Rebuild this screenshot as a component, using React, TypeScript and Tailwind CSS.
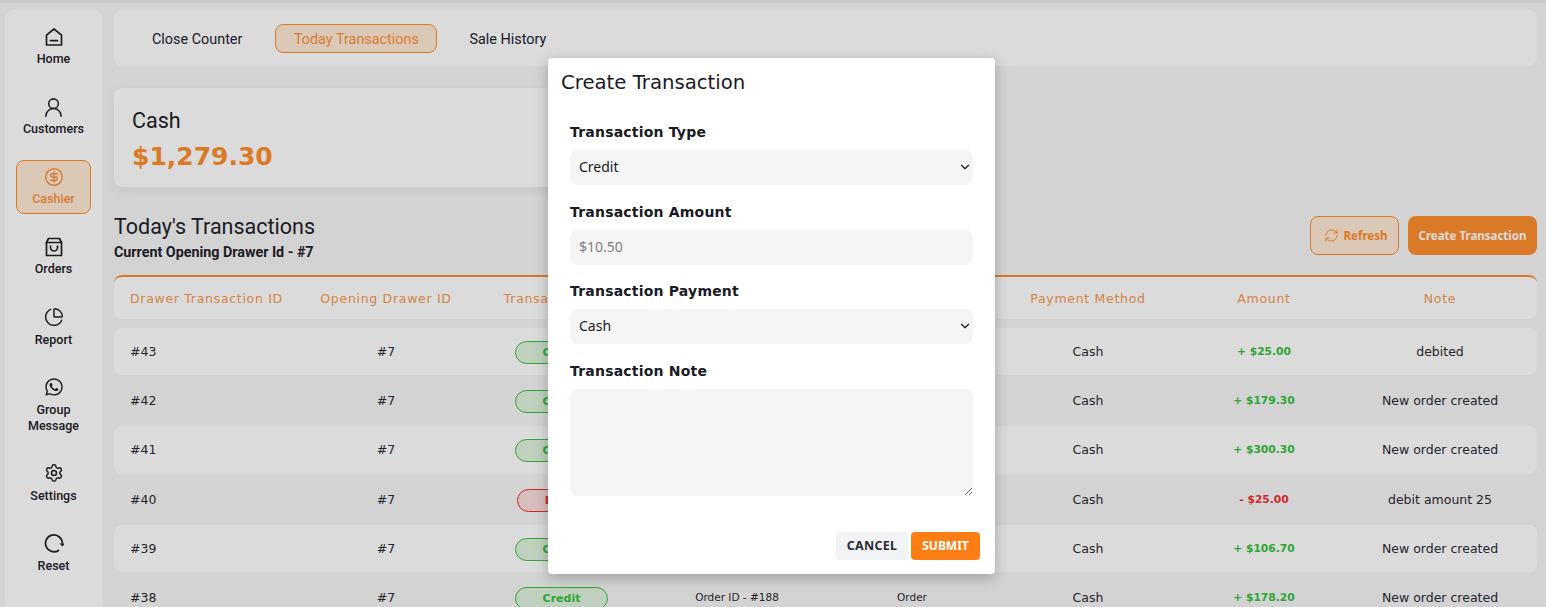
import { UserRound, CircleDollarSign, ChartPie, Settings, RefreshCw, ChevronDown } from "lucide-react";
import { FaWhatsapp } from "react-icons/fa";

const HomeIcon = () => (
  <svg width="20" height="20" viewBox="0 0 20 20" fill="none" stroke="currentColor" strokeWidth="1.7" strokeLinejoin="round" strokeLinecap="round">
    <path d="M2.5 8.2 10 2l7.5 6.2V18h-15z" />
    <path d="M6.5 13.6h7" />
  </svg>
);

const BagIcon = () => (
  <svg width="20" height="20" viewBox="0 0 20 20" fill="none" stroke="currentColor" strokeWidth="1.7" strokeLinejoin="round" strokeLinecap="round">
    <path d="M4.5 1.5h11l2 4V18.5h-15V5.5z" />
    <path d="M2.5 5.5h15" />
    <path d="M6.5 9v1.5a3.5 3.5 0 0 0 7 0V9" />
  </svg>
);

const ResetIcon = () => (
  <svg width="20" height="20" viewBox="0 0 20 20" fill="none" stroke="currentColor" strokeWidth="1.8" strokeLinecap="round">
    <path d="M14.5 17.4A8.4 8.4 0 1 1 18.3 9.4" />
    <path d="M15.7 10.2h5l-2.5 3.6z" fill="currentColor" stroke="none" />
  </svg>
);

const NAV = [
  { label: "Home", icon: <HomeIcon /> },
  { label: "Customers", icon: <UserRound size={23} strokeWidth={1.6} /> },
  { label: "Cashier", icon: <CircleDollarSign size={20} strokeWidth={1.8} />, active: true },
  { label: "Orders", icon: <BagIcon /> },
  { label: "Report", icon: <ChartPie size={20} strokeWidth={1.8} /> },
  { label: "Group Message", icon: <FaWhatsapp size={20} /> },
  { label: "Settings", icon: <Settings size={20} strokeWidth={1.8} /> },
  { label: "Reset", icon: <ResetIcon /> },
];

const ROWS = [
  { id: "#43", type: "Credit", source: "", by: "", amount: "+ $25.00", note: "debited", h: "h-[47px]" },
  { id: "#42", type: "Credit", source: "", by: "", amount: "+ $179.30", note: "New order created", h: "h-[51px]" },
  { id: "#41", type: "Credit", source: "", by: "", amount: "+ $300.30", note: "New order created", h: "h-[48px]" },
  { id: "#40", type: "Debit", source: "", by: "", amount: "- $25.00", note: "debit amount 25", h: "h-[51px]" },
  { id: "#39", type: "Credit", source: "", by: "", amount: "+ $106.70", note: "New order created", h: "h-[47px]" },
  { id: "#38", type: "Credit", source: "Order ID - #188", by: "Order", amount: "+ $178.20", note: "New order created", h: "h-[51px]" },
];

const dejavu = "font-['DejaVu_Sans',sans-serif]";
const cols = "grid grid-cols-[176px_192px_159px_192px_158px_194px_158px_194px] items-center text-center";

const Field = ({ label, children }: { label: string; children: React.ReactNode }) => (
  <div className="mb-[16.7px]">
    <label className={`block text-[14px] leading-[20px] font-bold text-[#1a1a24] tracking-[0.2px] mb-[8px] ${dejavu}`}>{label}</label>
    {children}
  </div>
);

const Select = ({ options }: { options: string[] }) => (
  <div className="relative">
    <select className="block w-full h-[35px] appearance-none rounded-lg bg-[#f5f5f5] pl-[9px] pr-[2px] pb-[2px] text-[14px] text-[#1a1a24] font-['Noto_Sans',sans-serif]">
      {options.map((o) => (
        <option key={o}>{o}</option>
      ))}
    </select>
    <ChevronDown size={14} strokeWidth={2} className="absolute right-[1px] top-[10px] text-[#1a1a24]" />
  </div>
);

export default function App() {
  return (
    <div className="relative h-[607px] w-[1546px] overflow-hidden bg-[#f6f6f6] font-['Roboto',sans-serif]">
      <div className="flex h-full pt-[10px] pl-[5px] border-t-[3px] border-[#ececec]">
        <aside className="w-[97px] shrink-0 h-[700px] -mt-[3px] rounded-t-lg bg-white flex flex-col items-center pt-[17px]">
          {NAV.map((n) => (
            <div
              key={n.label}
              className={`w-[75px] flex flex-col items-center text-center text-[12.5px] leading-4 font-medium ${n.label === "Group Message" ? "h-[86px]" : "h-[70px]"} ${n.active ? "!h-[54px] -mt-[7px] mb-[23px] pt-[6px] rounded-lg border border-[#ff8e2d] bg-[#ffe9d4] text-[#fb9440]" : "text-[#22222c]"}`}
            >
              <span className="h-5 flex items-center">{n.icon}</span>
              <span className={n.label === "Home" || n.label === "Customers" || n.label === "Cashier" || n.label === "Orders" ? "mt-[4px]" : "mt-[5px]"}>{n.label}</span>
            </div>
          ))}
        </aside>
        <main className="flex-1 pl-[12px] pr-[9px] min-w-0">
          <div className="h-[56px] rounded-lg bg-white flex items-center pl-[20px] gap-[15px] text-[14.4px] text-[#22222c] -mt-[3px]">
            <span className="px-[18px] pt-[3px]">Close Counter</span>
            <span className="px-[17.5px] pt-[3px] h-[29px] flex items-center rounded-lg border border-[#ff8e2d] bg-[#ffe9d4] text-[#fb9440]">Today Transactions</span>
            <span className="px-[17px] pt-[3px]">Sale History</span>
          </div>
          <div className="mt-[22px] h-[99px] w-[500px] rounded-lg bg-white shadow-[0_4px_12px_rgba(0,0,0,0.06)] px-[18px] pt-[19px]">
            <div className="text-[21.5px] leading-[28px] text-[#22222c]">Cash</div>
            <div className={`mt-[6px] text-[25px] leading-[32px] font-bold text-[#ff8e2d] ${dejavu}`}>$1,279.30</div>
          </div>
          <div className="mt-[26px] flex items-start justify-between">
            <div>
              <h2 className="text-[21.5px] leading-[28px] text-[#22222c]">Today's Transactions</h2>
              <div className="text-[14.3px] leading-[22px] font-bold text-[#22222c]">Current Opening Drawer Id - #7</div>
            </div>
            <div className="flex gap-[9px] mt-[3px] font-['Noto_Sans',sans-serif] text-[11.5px] font-bold">
              <button className="h-[39px] w-[89px] flex items-center justify-center gap-[5px] pl-[2px] rounded-lg border border-[#ff8e2d] bg-[#ffe9d4] text-[#ff8e2d]">
                <RefreshCw size={15} strokeWidth={1.6} />
                Refresh
              </button>
              <button className="h-[39px] w-[129px] rounded-lg bg-[#ff8e2d] text-white">Create Transaction</button>
            </div>
          </div>
          <div className={`mt-[12px] ${dejavu}`}>
            <div className={`${cols} h-[44px] pt-[2px] rounded-lg border-t-2 border-[#ff8e2d] bg-white text-[12.5px] tracking-[0.7px] text-[#f99a4f]`}>
              <span className="text-left pl-[16px] whitespace-nowrap">Drawer Transaction ID</span>
              <span>Opening Drawer ID</span>
              <span>Transaction Type</span>
              <span>Source</span>
              <span>Transaction By</span>
              <span>Payment Method</span>
              <span>Amount</span>
              <span>Note</span>
            </div>
            <div className="mt-[9px]">
              {ROWS.map((r, i) => (
                <div key={r.id} className={`${cols} ${r.h} pt-[1px] text-[12.5px] text-[#2b2b33] ${i % 2 === 0 ? "rounded-lg bg-white" : ""}`}>
                  <span className="text-left pl-[16px]">{r.id}</span>
                  <span>#7</span>
                  <span className="flex justify-center">
                    <span className={`${r.type === "Credit" ? "w-[93px] border-[#36c03f] bg-[#dff3df] text-[#36c03f]" : "w-[89px] border-[#f03030] bg-[#fbdcdc] text-[#f03030]"} h-[23px] rounded-full border text-[11px] leading-[21px] font-bold`}>{r.type}</span>
                  </span>
                  <span className="text-[10.5px]">{r.source}</span>
                  <span className="text-[10.5px]">{r.by}</span>
                  <span>Cash</span>
                  <span className={`text-[10.7px] font-bold ${r.type === "Credit" ? "text-[#36c03f]" : "text-[#f03030]"}`}>{r.amount}</span>
                  <span>{r.note}</span>
                </div>
              ))}
            </div>
          </div>
        </main>
      </div>

      {/* modal */}
      <div className="absolute inset-0 bg-black/[0.14]" />
      <div className={`absolute left-[548px] top-[58px] w-[447px] h-[516px] rounded bg-white shadow-[0_4px_14px_rgba(0,0,0,0.25)] ${dejavu}`}>
        <h3 className="pl-[13px] pt-[13px] text-[19.7px] leading-[24px] text-[#1a1a24]">Create Transaction</h3>
        <div className="px-[22px] pt-[27px]">
          <Field label="Transaction Type">
            <Select options={["Credit", "Debit"]} />
          </Field>
          <Field label="Transaction Amount">
            <input placeholder="$10.50" className="block w-full h-[35px] rounded-lg bg-[#f5f5f5] px-[9px] pb-[2px] text-[14px] placeholder:text-[#808080] font-['Noto_Sans',sans-serif]" />
          </Field>
          <Field label="Transaction Payment">
            <Select options={["Cash"]} />
          </Field>
          <Field label="Transaction Note">
            <textarea className="block w-full h-[107px] rounded-lg bg-[#f5f5f5] px-[9px] py-2 text-[14px]" />
          </Field>
        </div>
        <div className="absolute right-[15px] bottom-[14px] flex gap-[3px] font-['Noto_Sans',sans-serif] text-[12.5px] font-bold tracking-[0.3px]">
          <button className="h-[28px] w-[72px] rounded bg-[#f1f3f5] text-[#2b2b33]">CANCEL</button>
          <button className="h-[28px] w-[69px] rounded bg-[#fd7e14] text-white text-[12px] tracking-normal">SUBMIT</button>
        </div>
      </div>
    </div>
  );
}
